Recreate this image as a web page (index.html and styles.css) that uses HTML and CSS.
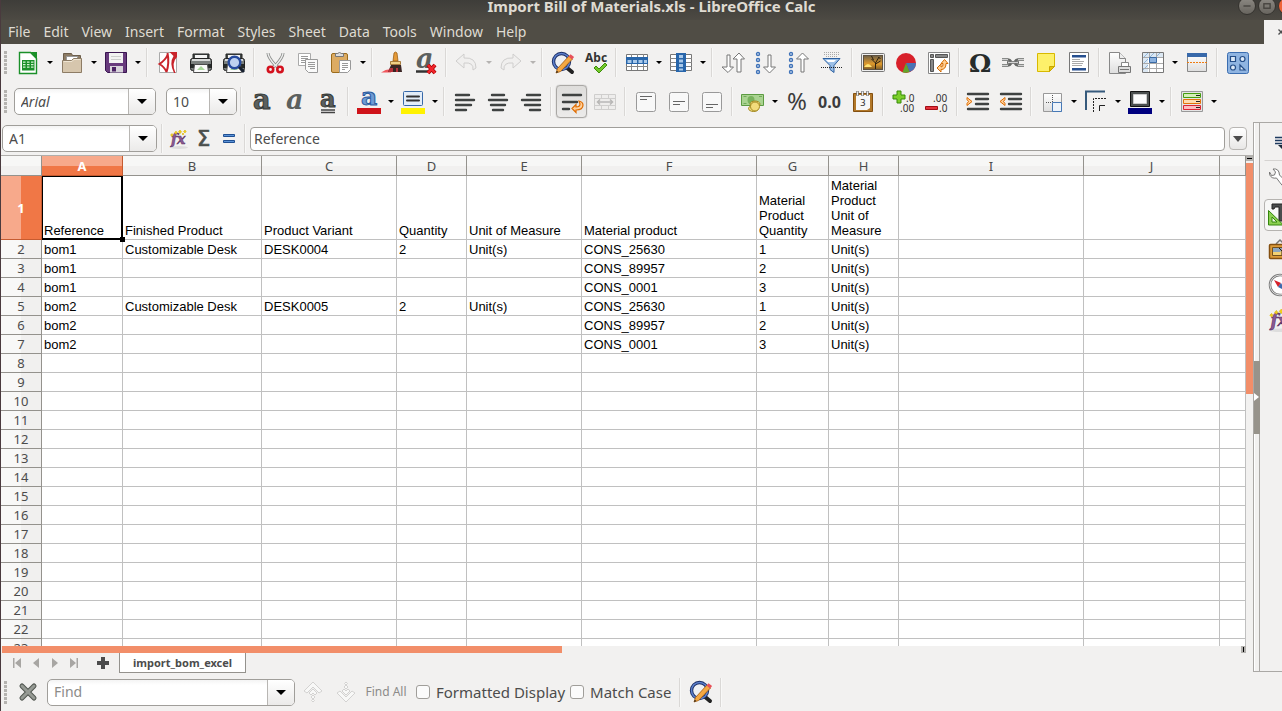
FILE: index.html
```html
<!DOCTYPE html>
<html lang="en">
<head>
<meta charset="utf-8">
<title>Import Bill of Materials.xls - LibreOffice Calc</title>
<link rel="stylesheet" href="styles.css">
</head>
<body>
<svg class="defs" aria-hidden="true">
  <defs>
    <linearGradient id="g-paper" x1="0" y1="0" x2="0" y2="1"><stop offset="0" stop-color="#fff"/><stop offset="1" stop-color="#dedede"/></linearGradient>
    <linearGradient id="g-sun" x1="0" y1="0" x2="0" y2="1"><stop offset="0" stop-color="#6d6048"/><stop offset=".6" stop-color="#e09a2c"/><stop offset="1" stop-color="#7a5a28"/></linearGradient>
    <symbol id="i-find" viewBox="0 0 24 24">
      <path d="M15 16l6 5" stroke="#222" stroke-width="4" stroke-linecap="round"/>
      <circle cx="10.500" cy="10.500" r="8" fill="#eef0f4" stroke="#1d2f66" stroke-width="3.400"/>
      <circle cx="10.500" cy="10.500" r="8" fill="none" stroke="#5d81cf" stroke-width="1.500"/>
      <path d="M5 22l1.500-4.500L18 5l3.500 3L9.500 20.500z" fill="#f5a843" stroke="#a0590c" stroke-width=".8"/>
      <path d="M17.500 5.500l2-2.200 3.600 2.800-2 2.400z" fill="#e8505a"/><path d="M5 22l.8-2.300 1.500 1.300z" fill="#222"/>
    </symbol>
    <symbol id="i-fx" viewBox="0 0 24 24">
      <ellipse cx="12" cy="20.500" rx="9" ry="1.500" fill="#ddd"/>
      <text x="4" y="17" font-family="DejaVu Serif" font-size="14" font-style="italic" font-weight="bold" fill="#8a5a93" stroke="#5a2f62" stroke-width=".5">fx</text>
      <path d="M5 6.500l1 1.500-1 1.500-1.500-1.500zM9 4l1.200 1.700L9 7.200 7.500 5.700zM13 3l1.600 1.800L13 6.700l-1.600-1.900zM18 3l1.200 1.500L18 6l-1.500-1.500zM16 6l1 1-1 1-1-1z" fill="#f0cf1c" stroke="#d8b000" stroke-width=".5"/>
    </symbol>
    <symbol id="i-picture" viewBox="0 0 24 24">
      <rect x=".5" y="2.500" width="23" height="18" rx="1" fill="#eee" stroke="#777"/>
      <rect x="2.500" y="4.500" width="19" height="14" fill="url(#g-sun)" stroke="#5d5140"/>
      <path d="M3 16q4-6 8 0z" fill="#ffe272"/><path d="M14.500 18v-6l-4-4m4 4l3.500-6m-3.500 7l5-3m-9-5l2 4m5-3l2 2" stroke="#2b2010" stroke-width="1" fill="none"/>
    </symbol>
    <symbol id="i-printer" viewBox="0 0 24 24">
      <path d="M4 3h16v5H4z" fill="#444a48" stroke="#222"/><path d="M6 4h12v4H6z" fill="#f4f4f4"/>
      <rect x="1.500" y="7.500" width="21" height="12" rx="2" fill="#7b807e" stroke="#222"/>
      <path d="M2 13h20v4H2z" fill="#262a29"/><path d="M3 9h18" stroke="#d8dad9" stroke-width="2"/>
      <path d="M5.500 13.500h13l1 8h-15z" fill="#fafafa" stroke="#4c4c4c"/><path d="M8 19l4-4 4 4z" fill="#a8d79a"/>
    </symbol>
    <symbol id="i-sheet-doc" viewBox="0 0 24 24">
      <path d="M3.500 1.500h11l6 6v15h-17z" fill="#fff" stroke="#1b9029" stroke-width="1.400"/><path d="M14.500 1h6.500v7z" fill="#1b9029"/>
      <path d="M6 9h12.500v10.500H6z" fill="#1b9029"/><path d="M7 10.500h2.500v1.200H7zm4 0h2.500v1.200H11zm4 0h2.500v1.200H15zm-8 2.500h2.500v1.200H7zm4 0h2.500v1.200H11zm4 0h2.500v1.200H15zM7 15.500h2.500v1.200H7zm4 0h2.500v1.200H11zm4 0h2.500v1.200H15z" fill="#d4f5d2"/>
    </symbol>
    <symbol id="i-findup" viewBox="0 0 24 24">
      <path d="M12 2l9 9-3 2-6-6-6 6-3-2zM12 9l4 4-2 2-2-2-2 2-2-2zM12 15l2 2-2 2-2-2zM12 19l1.500 1.500L12 22l-1.500-1.500z" fill="#f8f8f7" stroke="#cfcecd" stroke-width=".9"/>
    </symbol>
  </defs>
</svg>

<div class="app">
  <header class="titlebar">
    <h1>Import Bill of Materials.xls - LibreOffice Calc</h1>
    <div class="window-controls">
      <button aria-label="Minimize"><svg viewBox="0 0 18 18"><path d="M5 9h8" stroke="#45433e" stroke-width="1.500"/></svg></button>
      <button aria-label="Maximize"><svg viewBox="0 0 18 18"><rect x="5.500" y="6.500" width="7" height="5" fill="none" stroke="#45433e" stroke-width="1.500"/></svg></button>
      <button class="close" aria-label="Close"></button>
    </div>
  </header>
  <nav class="menubar">
    <button>File</button><button>Edit</button><button>View</button><button>Insert</button><button>Format</button><button>Styles</button><button>Sheet</button><button>Data</button><button>Tools</button><button>Window</button><button>Help</button>
    <button class="close-doc" aria-label="Close document"><svg viewBox="0 0 8 8"><path d="M1.500 1.500l5 5m0-5l-5 5" stroke="#4c4c4c" stroke-width="1.300"/></svg></button>
  </nav>

  <div class="toolbar">
    <span class="handle"></span>
    <button class="tool" aria-label="New"><svg><use href="#i-sheet-doc"/></svg></button><button class="drop" aria-label="New options"></button>
    <button class="tool" aria-label="Open"><svg viewBox="0 0 24 24"><path d="M3.500 2.500h8l1 2h8v14h-17z" fill="#8d7c65" stroke="#6d5e4b"/><path d="M6.500 5.500h11v9h-11z" fill="#fff" stroke="#999"/><path d="M2.500 9.500h9l2-2h8v14h-19z" fill="#d6c6ad" stroke="#8d7c65"/><path d="M3.500 10.500h8.500l2-2h6.500" stroke="#efe5d3" fill="none"/></svg></button><button class="drop" aria-label="Open options"></button>
    <button class="tool" aria-label="Save"><svg viewBox="0 0 24 24"><path d="M1.500 1.500h21v20h-19l-2-2z" fill="#673a7c" stroke="#391550"/><path d="M5 2h14v10H5z" fill="#f2f2f2"/><path d="M7 5.500h10M7 8.500h10" stroke="#ccc"/><path d="M6 15h13v6.500H6z" fill="#d7d3da"/><path d="M8 16h4v4.500H8z" fill="#4b2063"/></svg></button><button class="drop" aria-label="Save options"></button>
    <span class="sep"></span>
    <button class="tool" aria-label="Export as PDF"><svg viewBox="0 0 24 24"><path d="M3.500 1.500h17v20h-17z" fill="#fff" stroke="#aaa"/><path d="M11.500 4q-2 5-8 9 5 3 7 8M11.500 2q2 10-1 19" fill="none" stroke="#c9242b" stroke-width="2"/><path d="M13.500 1H21v5q-6 6-1.500 16H18q-5-10-.5-17z" fill="#c9242b"/></svg></button>
    <button class="tool" aria-label="Print"><svg><use href="#i-printer"/></svg></button>
    <button class="tool" aria-label="Print Preview"><svg viewBox="0 0 24 24"><use href="#i-printer"/><circle cx="12.500" cy="11.500" r="5.800" fill="#bdd1f0" stroke="#274b9e" stroke-width="2.400"/><path d="M17 16l5 5" stroke="#17202f" stroke-width="3"/></svg></button>
    <span class="sep"></span>
    <button class="tool" aria-label="Cut"><svg viewBox="0 0 24 24"><path d="M5 2q0 4 7 12l3 2M20 2q0 4-7 12l-3 2" fill="none" stroke="#8a8c8a" stroke-width="3"/><path d="M5 2q0 4 7 12l3 2M20 2q0 4-7 12l-3 2" fill="none" stroke="#eee" stroke-width="1.400"/><circle cx="7.500" cy="18.500" r="2.700" fill="none" stroke="#d4121e" stroke-width="2.600"/><circle cx="17" cy="18.500" r="2.700" fill="none" stroke="#d4121e" stroke-width="2.600"/></svg></button>
    <button class="tool" aria-label="Copy"><svg viewBox="0 0 24 24"><path d="M2.500 2.500h12v12h-12z" fill="#fff" stroke="#aaa"/><path d="M5 5.500h7M5 7.500h7M5 9.500h7M5 11.500h4" stroke="#999"/><path d="M9.500 8.500h12v13h-9l-3-3z" fill="#fafafa" stroke="#999"/><path d="M12 11.500h7M12 13.500h7M12 15.500h7M14 17.500h5" stroke="#999"/></svg></button>
    <button class="tool" aria-label="Paste"><svg viewBox="0 0 24 24"><rect x="2.500" y="2.500" width="16" height="19" rx="1.500" fill="#dcab62" stroke="#9b6c1c"/><path d="M6.500 5.500v-3h2q2-2 4 0h2v3z" fill="#ddd" stroke="#777"/><path d="M10.500 9.500h11v9l-3 3h-8z" fill="#fff" stroke="#999"/><path d="M13 12.500h6M13 14.500h6M13 16.500h6M13 18.500h3" stroke="#999"/></svg></button><button class="drop" aria-label="Paste options"></button>
    <span class="sep"></span>
    <button class="tool" aria-label="Clone Formatting"><svg viewBox="0 0 24 24"><path d="M0 21.500q6-4 11-3l-1 3z" fill="#f1575d"/><path d="M13 2q1.500-2 3 0l1 8h-5z" fill="#e59a38" stroke="#915508" stroke-width=".7"/><path d="M9.500 10.500h10v3h-10z" fill="#efcf86" stroke="#96631f" stroke-width=".8"/><path d="M10 14h10l1 7H7z" fill="#3a2524"/><path d="M9 17h3v4H7zM15 17h2v4h-2z" fill="#b8323a"/></svg></button>
    <button class="tool" aria-label="Clear Formatting"><svg viewBox="0 0 24 24"><text x="2" y="17" class="slab-it" font-size="27">a</text><path d="M2 20.500h12" stroke="#333" stroke-width="2.500"/><path d="M14 14l7 8m0-8l-7 8" stroke="#a50000" stroke-width="4"/><path d="M14 14l7 8m0-8l-7 8" stroke="#f2252c" stroke-width="2.600"/></svg></button>
    <span class="sep"></span>
    <button class="tool" aria-label="Undo" disabled><svg viewBox="0 0 24 24"><path d="M1 10l8-7v4q12-1 12 10l-3 2q1-8-9-7v5z" fill="#f0efee" stroke="#cfcecd"/></svg></button><button class="drop" aria-label="Undo history" disabled></button>
    <button class="tool" aria-label="Redo" disabled><svg viewBox="0 0 24 24"><path d="M22 10l-8-7v4Q2 6 2 17l3 2q-1-8 9-7v5z" fill="#f0efee" stroke="#cfcecd"/></svg></button><button class="drop" aria-label="Redo history" disabled></button>
    <span class="sep"></span>
    <button class="tool" aria-label="Find and Replace"><svg><use href="#i-find"/></svg></button>
    <button class="tool" aria-label="Spelling"><svg viewBox="0 0 24 24"><text x="1" y="11" font-family="Noto Sans" font-weight="bold" font-size="12" fill="#333">Abc</text><path d="M10 17l2-2 3 3 6-6 2 2-8 8z" fill="#74c82c" stroke="#3c8d08"/></svg></button>
    <span class="sep"></span>
    <button class="tool" aria-label="Row"><svg viewBox="0 0 24 24"><path d="M1.500 3.500h21v16h-21z" fill="#fff" stroke="#777"/><path d="M1 7.500h22M1 15.500h22M6.500 3v16M12.500 3v16M18.500 3v16" stroke="#888"/><path d="M1 6h22v7H1z" fill="#2866ab"/><path d="M2.500 9h4v3h-4zM8 9h4v3H8zM13.500 9h4v3h-4zM19 9h3v3h-3z" fill="#a9c9ea"/></svg></button><button class="drop" aria-label="Row options"></button>
    <button class="tool" aria-label="Column"><svg viewBox="0 0 24 24"><path d="M1.500 3.500h21v16h-21z" fill="#fff" stroke="#777"/><path d="M1 7.500h22M1 11.500h22M1 15.500h22" stroke="#888"/><path d="M7 2h10v19H7z" fill="#2866ab"/><path d="M10 4h4v3h-4zM10 8.500h4v3h-4zM10 13h4v3h-4zM10 17.500h4v2h-4z" fill="#a9c9ea"/></svg></button><button class="drop" aria-label="Column options"></button>
    <span class="sep"></span>
    <button class="tool" aria-label="Sort"><svg viewBox="0 0 24 24"><path d="M6 4h3v12h3.500L7 21.500 1 16h5zM16 21h4V8h3.500L18 2l-6 6h4z" fill="#fff" stroke="#777"/></svg></button>
    <button class="tool" aria-label="Sort Ascending"><svg viewBox="0 0 24 24"><g fill="#fff" stroke="#3f72b8" stroke-width="1.400"><circle cx="4" cy="3" r="1.500"/><circle cx="4" cy="9" r="1.500"/><circle cx="4" cy="15" r="1.500"/><circle cx="4" cy="21" r="1.500"/></g><path d="M14 4h3v12h4.500L15.500 22l-6-6H14z" fill="#fff" stroke="#777"/></svg></button>
    <button class="tool" aria-label="Sort Descending"><svg viewBox="0 0 24 24"><g fill="#fff" stroke="#3f72b8" stroke-width="1.400"><circle cx="4" cy="3" r="1.500"/><circle cx="4" cy="9" r="1.500"/><circle cx="4" cy="15" r="1.500"/><circle cx="4" cy="21" r="1.500"/></g><path d="M14 21h3V8h4.500l-6-6-6 6H14z" fill="#fff" stroke="#777"/></svg></button>
    <button class="tool" aria-label="AutoFilter"><svg viewBox="0 0 24 24"><path d="M4 1.500h15M4 3.500h15M6 5.500h12" stroke="#aaa" stroke-dasharray="1 1"/><path d="M3 7.500h17l-6 7v7l-4-3v-4z" fill="#9cc0e8" stroke="#2c60a0"/><path d="M6 9h10l-2 2H8z" fill="#fff"/><path d="M1 16.500h22" stroke="#222" stroke-dasharray="1 1"/></svg></button>
    <span class="sep"></span>
    <button class="tool" aria-label="Insert Image"><svg><use href="#i-picture"/></svg></button>
    <button class="tool" aria-label="Insert Chart"><svg viewBox="0 0 24 24"><circle cx="12" cy="12" r="10" fill="#d8202a"/><path d="M12 12h10a10 10 0 0 1-6.500 9z" fill="#4a73b4"/><path d="M12 12l3.500 9a10 10 0 0 1-7 .3z" fill="#64a52c"/></svg></button>
    <button class="tool" aria-label="Insert Pivot Table"><svg viewBox="0 0 24 24"><path d="M1.500 1.500h21v21h-21z" fill="#fff" stroke="#888"/><path d="M3.500 3.500h3v3h-3zM8.500 3.500h12v3h-12zM3.500 8.500h3v12h-3z" fill="#888" stroke="#555"/><path d="M17.500 8.500l3.500 4h-2q0 6-5 6v2.500l-4-4 4-4V16q2.500 0 2-3.500h-2z" fill="#ffcf93" stroke="#d56a00"/></svg></button>
    <span class="sep"></span>
    <button class="tool" aria-label="Special Character"><svg viewBox="0 0 24 24"><text x="1" y="21" font-family="DejaVu Serif" font-weight="bold" font-size="25" fill="#262b2b">Ω</text></svg></button>
    <button class="tool" aria-label="Insert Hyperlink"><svg viewBox="0 0 24 24"><path d="M1 8.500h6q2 0 3 2M1 14.500h6q2 0 3-2M23 8.500h-6q-2 0-3 2M23 14.500h-6q-2 0-3-2" fill="none" stroke="#666866" stroke-width="2.600"/><path d="M1 8.500h6M1 14.500h6M23 8.500h-6M23 14.500h-6" stroke="#ddd" stroke-width=".9"/><path d="M6 11.500h12" stroke="#666866" stroke-width="2.600"/><path d="M7 11.500h10" stroke="#ddd" stroke-width=".9"/></svg></button>
    <button class="tool" aria-label="Insert Comment"><svg viewBox="0 0 24 24"><path d="M3.500 2.500h17v13l-5 5h-12z" fill="#fdf06a" stroke="#d8b900"/><path d="M20.500 15.500l-5 5v-5z" fill="#e5c40c" stroke="#c8a600"/></svg></button>
    <button class="tool" aria-label="Headers and Footers"><svg viewBox="0 0 24 24"><path d="M2.500 1.500h19v20h-19z" fill="#fff" stroke="#777"/><path d="M5 4h14v2.500H5zM5 17h14v2.500H5z" fill="#264f8f"/><path d="M5 8.500h8M5 10.500h12M5 12.500h11M5 14.500h10" stroke="#aaa"/></svg></button>
    <span class="sep"></span>
    <button class="tool" aria-label="Define Print Area"><svg viewBox="0 0 24 24"><path d="M1.500 1.500h10l6 6v15h-16z" fill="url(#g-paper)" stroke="#888"/><path d="M11.500 1.500v6h6" fill="#eee" stroke="#888"/><path d="M13.500 11.500h7v5h-7z" fill="#fff" stroke="#888"/><path d="M10.500 15.500h12v6h-12z" fill="#ddd" stroke="#777"/><path d="M12 18.500h9" stroke="#777"/></svg></button>
    <button class="tool" aria-label="Freeze Rows and Columns"><svg viewBox="0 0 24 24"><path d="M1.500 1.500h21v20h-21z" fill="#fff" stroke="#777"/><path d="M2 2h20v5H2zM2 7h5v14H2z" fill="#dce8f3"/><path d="M3 6l4-4M9 6l4-4M15 6l4-4M2 13l5-5M2 19l5-5" stroke="#91b5d6"/><path d="M2 6.500h20M8.500 2v19M2 12.500h20M2 17.500h20M15.500 2v19" stroke="#aaa"/><path d="M8.500 6.500h7v5h-7z" fill="#8cb2df" stroke="#3c6ba5"/></svg></button><button class="drop" aria-label="Freeze options"></button>
    <button class="tool" aria-label="Split Window"><svg viewBox="0 0 24 24"><path d="M2.500 2.500h19v18h-19z" fill="url(#g-paper)" stroke="#888"/><path d="M2 2h20v4H2z" fill="#3869aa"/><path d="M2 11.500h20" stroke="#ef7d12" stroke-dasharray="2 1"/></svg></button>
    <span class="sep"></span>
    <button class="tool" aria-label="Show Draw Functions"><svg viewBox="0 0 24 24"><rect x="1.500" y="1.500" width="21" height="21" rx="2" fill="#8fb4e1" stroke="#3b6db0"/><g fill="#dce9f7" stroke="#244d87" stroke-width="1.200"><path d="M4.500 5.500h5v5h-5zM14 19v-5l5 5z"/><circle cx="16.500" cy="8" r="2.500"/><circle cx="7" cy="16.500" r="2.500"/></g></svg></button>
  </div>

  <div class="toolbar">
    <span class="handle"></span>
    <div class="combo font-name"><input type="text" value="Arial" aria-label="Font name"><button aria-label="Show fonts"></button></div>
    <div class="combo font-size"><input type="text" value="10" aria-label="Font size"><button aria-label="Show sizes"></button></div>
    <span class="sep"></span>
    <button class="tool" aria-label="Bold"><svg viewBox="0 0 24 24"><text x="3" y="19" class="slab" font-size="27">a</text></svg></button>
    <button class="tool" aria-label="Italic"><svg viewBox="0 0 24 24"><text x="3" y="19" class="slab-it" font-size="27">a</text></svg></button>
    <button class="tool" aria-label="Underline"><svg viewBox="0 0 24 24"><text x="4" y="17" class="slab" font-size="24">a</text><path d="M5 20h14M5 22.500h14" stroke="#444" stroke-width="1.300"/></svg></button>
    <span class="sep"></span>
    <button class="tool" aria-label="Font Color"><svg viewBox="0 0 24 24"><text x="4" y="15" font-family="DejaVu Serif" font-weight="bold" font-size="25" fill="#6e9bd5" stroke="#2b5b9e">a</text><path d="M0 18h24v6H0z" fill="#cf1319"/></svg></button><button class="drop" aria-label="Font color options"></button>
    <button class="tool" aria-label="Highlighting"><svg viewBox="0 0 24 24"><rect x="2.500" y="1.500" width="19" height="14" rx="1" fill="#e3edf8" stroke="#3768a8"/><path d="M6 6.500h12M6 10.500h12" stroke="#333" stroke-width="2" stroke-linecap="round"/><path d="M0 18h24v6H0z" fill="#fff200"/></svg></button><button class="drop" aria-label="Highlighting options"></button>
    <span class="sep"></span>
    <button class="tool" aria-label="Align Left"><svg viewBox="0 0 24 24"><path d="M3 5h13M3 10h18M3 15h15M3 20h10" class="bars"/></svg></button>
    <button class="tool" aria-label="Center"><svg viewBox="0 0 24 24"><path d="M6 5h12M3 10h18M5 15h14M7 20h10" class="bars"/></svg></button>
    <button class="tool" aria-label="Align Right"><svg viewBox="0 0 24 24"><path d="M8 5h13M3 10h18M6 15h15M11 20h10" class="bars"/></svg></button>
    <span class="sep"></span>
    <button class="tool pressed" aria-label="Wrap Text"><svg viewBox="0 0 24 24"><path d="M3 5h18M3 12h14M3 19h6" class="bars"/><path d="M19 11q4 1 4 4 0 5-7 5v2.500l-4-4 4-4V17q4 0 4-3z" fill="#ffd09a" stroke="#e06c00" stroke-width="1.200"/></svg></button>
    <button class="tool" aria-label="Merge Cells" disabled><svg viewBox="0 0 24 24"><path d="M1.500 4.500h21v15h-21z" fill="#eeedec" stroke="#cfcecd"/><path d="M1 8.500h22M1 15.500h22M8.500 4v4M15.500 4v4M8.500 16v4M15.500 16v4" stroke="#cfcecd"/><path d="M4 12h16M7 9.500L4.500 12 7 14.500M17 9.500l2.500 2.500-2.500 2.500" fill="none" stroke="#b8b7b6" stroke-width="1.500"/></svg></button>
    <span class="sep"></span>
    <button class="tool" aria-label="Align Top"><svg viewBox="0 0 24 24"><rect x="2.500" y="2.500" width="19" height="19" rx="2" class="valign"/><path d="M6 6.500h12M6 9.500h7" stroke="#666"/></svg></button>
    <button class="tool" aria-label="Center Vertically"><svg viewBox="0 0 24 24"><rect x="2.500" y="2.500" width="19" height="19" rx="2" class="valign"/><path d="M6 11.500h12M6 14.500h7" stroke="#666"/></svg></button>
    <button class="tool" aria-label="Align Bottom"><svg viewBox="0 0 24 24"><rect x="2.500" y="2.500" width="19" height="19" rx="2" class="valign"/><path d="M6 14.500h12M6 17.500h7" stroke="#666"/></svg></button>
    <span class="sep"></span>
    <button class="tool" aria-label="Format as Currency"><svg viewBox="0 0 24 24"><path d="M.5 4.500h22v11H.5z" fill="#a9d390" stroke="#5c9b42"/><ellipse cx="10" cy="10" rx="3.500" ry="4" fill="#78b35d"/><path d="M2.500 6.500h3M2.500 13.500h3M18 6.500h3" stroke="#71a95a"/><g fill="#f2dc7c" stroke="#a48a21"><ellipse cx="14" cy="14" rx="5" ry="3"/><ellipse cx="12.500" cy="18.500" rx="5" ry="3"/><circle cx="14" cy="16.500" r="4.500"/></g></svg></button><button class="drop" aria-label="Currency options"></button>
    <button class="tool" aria-label="Format as Percent"><svg viewBox="0 0 24 24"><text x="2" y="20" font-family="Noto Sans" font-size="24" fill="#3c3c3c">%</text></svg></button>
    <button class="tool" aria-label="Format as Number"><span class="number-icon">0.0</span></button>
    <button class="tool" aria-label="Format as Date"><svg viewBox="0 0 24 24"><path d="M2.500 3.500h19v18h-19z" fill="#b27829" stroke="#845010"/><path d="M5 5h14v13l-3 2H5z" fill="#f7f7f7"/><path d="M6.500 1v5M11.500 1v5M16.500 1v5" stroke="#777" stroke-width="2.500"/><path d="M6.500 1.500v4M11.500 1.500v4M16.500 1.500v4" stroke="#eee"/><text x="9" y="16" font-family="DejaVu Sans" font-size="9" fill="#333">3</text></svg></button>
    <span class="sep"></span>
    <button class="tool" aria-label="Add Decimal Place"><svg viewBox="0 0 24 24"><path d="M5 1h4v4h4v4H9v4H5V9H1V5h4z" fill="#7ccf2b" stroke="#378a08"/><text x="14" y="12" class="dec">.0</text><text x="8" y="22" class="dec">.00</text></svg></button>
    <button class="tool" aria-label="Delete Decimal Place"><svg viewBox="0 0 24 24"><path d="M.5 16.500h12v3h-12z" fill="#e4313a" stroke="#a10d15"/><text x="8" y="12" class="dec">.00</text><text x="14" y="22" class="dec">.0</text></svg></button>
    <span class="sep"></span>
    <button class="tool" aria-label="Increase Indent"><svg viewBox="0 0 24 24"><path d="M2 4h20M10 9h12M10 14h12M2 19h20" class="bars"/><path d="M1 7.500l5 4-5 4v-2l1.500-2L1 9.500z" fill="#ffd09a" stroke="#e06c00"/></svg></button>
    <button class="tool" aria-label="Decrease Indent"><svg viewBox="0 0 24 24"><path d="M2 4h20M10 9h12M10 14h12M2 19h20" class="bars"/><path d="M6 7.500l-5 4 5 4v-2l-1.500-2L6 9.500z" fill="#ffd09a" stroke="#e06c00"/></svg></button>
    <span class="sep"></span>
    <button class="tool" aria-label="Borders"><svg viewBox="0 0 24 24"><path d="M3.500 3.500h18v18h-18z" fill="url(#g-paper)" stroke="#999"/><path d="M6 12.500h6M12.500 5v7" stroke="#555" stroke-dasharray="1 1"/><path d="M12.500 12.500h9v9h-9z" fill="#edf3fa" stroke="#4779b6"/></svg></button><button class="drop" aria-label="Border options"></button>
    <button class="tool" aria-label="Border Style"><svg viewBox="0 0 24 24"><path d="M2 20V1.500h19" fill="none" stroke="#365a7c" stroke-width="2"/><path d="M9.500 22V8.500H22" fill="none" stroke="#222" stroke-dasharray="2 1"/><path d="M15.500 21v-5.500H21" fill="none" stroke="#222"/></svg></button><button class="drop" aria-label="Border style options"></button>
    <button class="tool" aria-label="Border Color"><svg viewBox="0 0 24 24"><path d="M2.500 1.500h19v15h-19z" fill="#4b4f4f" stroke="#111"/><path d="M5.500 4.500h13v9h-13z" fill="#fafafa" stroke="#ccc"/><path d="M0 18h24v6H0z" fill="#00007f"/></svg></button><button class="drop" aria-label="Border color options"></button>
    <span class="sep"></span>
    <button class="tool" aria-label="Conditional Formatting"><svg viewBox="0 0 24 24"><path d="M1.500 1.500h21v20h-21z" fill="#e5e5e5" stroke="#999"/><path d="M3.500 3.500h17v4h-17z" fill="#d5efb9" stroke="#459c10"/><path d="M3.500 9.500h17v4h-17z" fill="#ffddb0" stroke="#e37309"/><path d="M3.500 15.500h17v4h-17z" fill="#fcbcc0" stroke="#db2632"/><path d="M16 5.500h4M16 11.500h4M16 17.500h4" stroke="#222"/></svg></button><button class="drop" aria-label="Conditional formatting options"></button>
  </div>

  <div class="workspace">
    <main class="document">
      <div class="formula-bar">
        <div class="combo name-box"><input type="text" value="A1" aria-label="Name box"><button aria-label="Show names"></button></div>
        <span class="sep"></span>
        <button class="tool small" aria-label="Function Wizard"><svg><use href="#i-fx"/></svg></button>
        <button class="tool small" aria-label="Sum"><svg viewBox="0 0 24 24"><text x="5" y="19" font-family="DejaVu Sans" font-size="21" fill="#4a4e4c" stroke="#4a4e4c" stroke-width=".7">Σ</text></svg></button>
        <button class="tool small" aria-label="Function"><svg viewBox="0 0 24 24"><path d="M6.500 7.500h11v2h-11zM6.500 13.500h11v2h-11z" fill="#5b93d8" stroke="#1f4f92"/></svg></button>
        <span class="sep"></span>
        <input class="formula" type="text" value="Reference" aria-label="Formula">
        <button class="expand" aria-label="Expand formula bar"></button>
      </div>

      <div class="sheet-area">
        <div class="sheet">
          <table>
            <colgroup><col class="c-row"><col class="c-a"><col class="c-b"><col class="c-c"><col class="c-d"><col class="c-e"><col class="c-f"><col class="c-g"><col class="c-h"><col class="c-i"><col class="c-j"><col></colgroup>
            <thead><tr><th></th><th class="selected">A</th><th>B</th><th>C</th><th>D</th><th>E</th><th>F</th><th>G</th><th>H</th><th>I</th><th>J</th><th></th></tr></thead>
            <tbody>
            <tr class="tall"><th class="selected">1</th><td class="cursor">Reference</td><td>Finished Product</td><td>Product Variant</td><td>Quantity</td><td>Unit of Measure</td><td>Material product</td><td>Material Product Quantity</td><td>Material Product Unit of Measure</td><td></td><td></td><td></td></tr>
            <tr><th>2</th><td>bom1</td><td>Customizable Desk</td><td>DESK0004</td><td>2</td><td>Unit(s)</td><td>CONS_25630</td><td>1</td><td>Unit(s)</td><td></td><td></td><td></td></tr>
            <tr><th>3</th><td>bom1</td><td></td><td></td><td></td><td></td><td>CONS_89957</td><td>2</td><td>Unit(s)</td><td></td><td></td><td></td></tr>
            <tr><th>4</th><td>bom1</td><td></td><td></td><td></td><td></td><td>CONS_0001</td><td>3</td><td>Unit(s)</td><td></td><td></td><td></td></tr>
            <tr><th>5</th><td>bom2</td><td>Customizable Desk</td><td>DESK0005</td><td>2</td><td>Unit(s)</td><td>CONS_25630</td><td>1</td><td>Unit(s)</td><td></td><td></td><td></td></tr>
            <tr><th>6</th><td>bom2</td><td></td><td></td><td></td><td></td><td>CONS_89957</td><td>2</td><td>Unit(s)</td><td></td><td></td><td></td></tr>
            <tr><th>7</th><td>bom2</td><td></td><td></td><td></td><td></td><td>CONS_0001</td><td>3</td><td>Unit(s)</td><td></td><td></td><td></td></tr>
            <tr><th>8</th><td></td><td></td><td></td><td></td><td></td><td></td><td></td><td></td><td></td><td></td><td></td></tr>
            <tr><th>9</th><td></td><td></td><td></td><td></td><td></td><td></td><td></td><td></td><td></td><td></td><td></td></tr>
            <tr><th>10</th><td></td><td></td><td></td><td></td><td></td><td></td><td></td><td></td><td></td><td></td><td></td></tr>
            <tr><th>11</th><td></td><td></td><td></td><td></td><td></td><td></td><td></td><td></td><td></td><td></td><td></td></tr>
            <tr><th>12</th><td></td><td></td><td></td><td></td><td></td><td></td><td></td><td></td><td></td><td></td><td></td></tr>
            <tr><th>13</th><td></td><td></td><td></td><td></td><td></td><td></td><td></td><td></td><td></td><td></td><td></td></tr>
            <tr><th>14</th><td></td><td></td><td></td><td></td><td></td><td></td><td></td><td></td><td></td><td></td><td></td></tr>
            <tr><th>15</th><td></td><td></td><td></td><td></td><td></td><td></td><td></td><td></td><td></td><td></td><td></td></tr>
            <tr><th>16</th><td></td><td></td><td></td><td></td><td></td><td></td><td></td><td></td><td></td><td></td><td></td></tr>
            <tr><th>17</th><td></td><td></td><td></td><td></td><td></td><td></td><td></td><td></td><td></td><td></td><td></td></tr>
            <tr><th>18</th><td></td><td></td><td></td><td></td><td></td><td></td><td></td><td></td><td></td><td></td><td></td></tr>
            <tr><th>19</th><td></td><td></td><td></td><td></td><td></td><td></td><td></td><td></td><td></td><td></td><td></td></tr>
            <tr><th>20</th><td></td><td></td><td></td><td></td><td></td><td></td><td></td><td></td><td></td><td></td><td></td></tr>
            <tr><th>21</th><td></td><td></td><td></td><td></td><td></td><td></td><td></td><td></td><td></td><td></td><td></td></tr>
            <tr><th>22</th><td></td><td></td><td></td><td></td><td></td><td></td><td></td><td></td><td></td><td></td><td></td></tr>
            <tr><th>23</th><td></td><td></td><td></td><td></td><td></td><td></td><td></td><td></td><td></td><td></td><td></td></tr>
            </tbody>
          </table>
        </div>
        <div class="vscroll"><span class="splitter"></span><span class="thumb"></span></div>
      </div>
      <div class="hscroll"><span class="thumb"></span><span class="splitter"></span></div>

      <div class="sheet-tabs">
        <button class="nav" aria-label="First sheet"><svg viewBox="0 0 12 12"><path d="M2 1h1.500v10H2zM10 1v10L4 6z"/></svg></button>
        <button class="nav" aria-label="Previous sheet"><svg viewBox="0 0 12 12"><path d="M9 1v10L3 6z"/></svg></button>
        <button class="nav" aria-label="Next sheet"><svg viewBox="0 0 12 12"><path d="M3 1v10l6-5z"/></svg></button>
        <button class="nav" aria-label="Last sheet"><svg viewBox="0 0 12 12"><path d="M2 1v10l6-5zM8.500 1H10v10H8.500z"/></svg></button>
        <button class="add-sheet" aria-label="Add sheet"><svg viewBox="0 0 12 12"><path d="M4 0h4v4h4v4H8v4H4V8H0V4h4z"/></svg></button>
        <button class="tab">import_bom_excel</button>
      </div>
    </main>

    <aside class="sidebar">
      <div class="grip"><button aria-label="Hide sidebar"></button></div>
      <div class="deck">
        <button class="side menu" aria-label="Sidebar settings"><svg viewBox="0 0 24 24"><path d="M7 7.500h14M7 10.500h14M7 13.500h14" stroke="#1e3a5f" stroke-width="1.400"/><path d="M10 15h8l-4 4z" fill="#1e2a3a"/></svg></button>
        <button class="side" aria-label="Properties"><svg viewBox="0 0 24 24"><path d="M1.500 4l2 3.500 3-.5 1-3L5 1q6-1 6.500 6l9 9q2 4-2 5-2 0-10-11-5 1-7-3.500z" fill="#fff" stroke="#777"/></svg></button>
        <button class="side active" aria-label="Styles"><svg viewBox="0 0 24 24"><path d="M4 1h19v5h-2l-1-2h-4v14h-5V4H7L6 6H4z" fill="#4a4d4d" stroke="#222"/><path d="M.5 7.500l15 14.500H.5z" fill="#8bcf51" stroke="#35860c"/><path d="M4 14l5 5H4z" fill="#eef8e5" stroke="#35860c"/></svg></button>
        <button class="side" aria-label="Gallery"><svg viewBox="0 0 24 24"><path d="M8 6l4-4 4 4" fill="none" stroke="#777" stroke-width="1.500"/><rect x="1.500" y="6.500" width="21" height="14" rx="1" fill="#dc9b38" stroke="#844f10" stroke-width="1.500"/><path d="M4.500 9.500h15v8h-15z" fill="#f3d173" stroke="#72501d"/><path d="M5 10h14v4l-4-3-3 3H5z" fill="#8ba5bf"/><path d="M14 17v-4l-3-3m3 3l3-3" stroke="#2b2010" fill="none"/></svg></button>
        <button class="side" aria-label="Navigator"><svg viewBox="0 0 24 24"><circle cx="12" cy="12" r="10" fill="#fff" stroke="#777" stroke-width="2.500"/><circle cx="12" cy="12" r="10" fill="none" stroke="#ddd"/><path d="M6 7l7 3-3 4z" fill="#d6212b"/><path d="M13 10l5 8-8-4z" fill="#3c6aae"/></svg></button>
        <button class="side" aria-label="Functions"><svg viewBox="2 2 20 20"><use href="#i-fx" width="24" height="24"/></svg></button>
      </div>
    </aside>
  </div>

  <form class="find-bar">
    <span class="handle"></span>
    <button type="button" class="tool" aria-label="Close Find Bar"><svg viewBox="0 0 24 24"><path d="M6 6l12 12M18 6L6 18" stroke="#50554f" stroke-width="5" stroke-linecap="round"/><path d="M6 6l12 12M18 6L6 18" stroke="#969a94" stroke-width="3" stroke-linecap="round"/></svg></button>
    <div class="combo find-box"><input type="text" placeholder="Find" aria-label="Find"><button type="button" aria-label="Search history"></button></div>
    <button type="button" class="tool" aria-label="Find Previous" disabled><svg><use href="#i-findup"/></svg></button>
    <button type="button" class="tool" aria-label="Find Next" disabled><svg class="flip"><use href="#i-findup"/></svg></button>
    <button type="button" class="find-all" disabled>Find All</button>
    <label><input type="checkbox"><span>Formatted Display</span></label>
    <label><input type="checkbox"><span>Match Case</span></label>
    <span class="sep"></span>
    <button type="button" class="tool" aria-label="Find and Replace"><svg><use href="#i-find"/></svg></button>
    <span class="sep"></span>
  </form>
</div>
</body>
</html>
```
FILE: styles.css
```css
* { box-sizing: border-box; }

body {
  margin: 0;
  overflow: hidden;
  background: #f2f1f0;
  color: #4c4c4c;
  font: 14px/20px "Noto Sans", sans-serif;
}

button {
  margin: 0;
  padding: 0;
  border: 0;
  background: none;
  color: inherit;
  font: inherit;
}

.defs { position: absolute; width: 0; height: 0; }

.app {
  display: flex;
  flex-direction: column;
  height: 100vh;
  border-left: 1px solid #4a3a3e;
}

/* Title and menus */
.titlebar {
  position: relative;
  flex: none;
  height: 20px;
  padding-left: 20px;
  overflow: hidden;
  background: linear-gradient(#3e3d39, #4d4a43);
}
.titlebar h1 {
  margin: 0;
  color: #dfdbd2;
  font-size: 15px;
  line-height: 12px;
  text-align: center;
}
.window-controls {
  position: absolute;
  top: -3px;
  right: -14px;
  display: flex;
  gap: 2px;
}
.window-controls button {
  width: 18px;
  height: 18px;
  border: 1px solid #35332f;
  border-radius: 50%;
  background: linear-gradient(#8c8983, #68655f);
}
.window-controls svg { display: block; width: 16px; height: 16px; }
.window-controls .close { background: #ee6339; }

.menubar {
  display: flex;
  flex: none;
  gap: 13px;
  height: 24px;
  padding-left: 7px;
  background: #504d45;
  color: #dfdbd2;
}
.menubar .close-doc {
  width: 18px;
  margin-left: auto;
  padding-left: 13px;
  overflow: hidden;
  background: #f2f1f0;
}
.close-doc svg { display: block; width: 8px; height: 8px; }

/* Toolbars */
.toolbar {
  display: flex;
  flex: none;
  align-items: center;
  height: 39px;
  padding-bottom: 2px;
}
.handle {
  flex: none;
  width: 3px;
  height: 23px;
  margin: 0 4px 0 3px;
  background: repeating-linear-gradient(#b5b3b0 0 3px, transparent 3px 4px);
}
.tool {
  display: flex;
  flex: none;
  align-items: center;
  justify-content: center;
  width: 33px;
  height: 33px;
}
.tool svg, .side svg { display: block; flex: none; width: 24px; height: 24px; }
.tool.small { width: 25px; }
.tool.pressed {
  width: 31px;
  margin: 0 1px;
  border: 1px solid #aaa8a5;
  border-radius: 4px;
  background: linear-gradient(#dedddb, #ecebea);
  box-shadow: 0 0 1px #888;
}
.flip { transform: scaleY(-1); }
.drop {
  display: flex;
  flex: none;
  justify-content: center;
  width: 11px;
}
.drop::before {
  content: "";
  border: solid transparent;
  border-width: 3px 3px 0;
  border-top-color: #000;
}
.drop:disabled::before { border-top-color: #b5b3b1; }
.sep {
  flex: none;
  width: 2px;
  height: 29px;
  margin: 0 3px;
  border-left: 1px solid #dad8d6;
  background: #f8f8f7;
}
.bars { stroke: #3f4241; stroke-width: 2.400; stroke-linecap: round; }
.valign { fill: #f8f8f8; stroke: #999; }
.slab, .slab-it {
  fill: #5c605e;
  stroke: #363a38;
  font-family: "DejaVu Serif", serif;
  font-weight: bold;
}
.slab-it { font-style: italic; stroke: none; }
.dec { fill: #333; font: 10px "Noto Sans", sans-serif; }
.number-icon { color: #3c3c3c; font-size: 16px; font-weight: 700; }

.combo {
  display: flex;
  flex: none;
  height: 27px;
  border: 1px solid #a09e9a;
  border-radius: 5px;
  overflow: hidden;
  background: linear-gradient(#f4f4f4, #fff 5px);
}
.combo input {
  flex: 1;
  min-width: 0;
  padding: 0 6px;
  border: 0;
  outline: 0;
  background: none;
  color: #4c4c4c;
  font: inherit;
}
.combo input::placeholder { color: #8c8b89; opacity: 1; }
.combo button {
  display: flex;
  align-items: center;
  justify-content: center;
  width: 27px;
  border-left: 1px solid #b8b6b3;
  background: linear-gradient(#fff, #ebeae9);
}
.combo button::before {
  content: "";
  border: solid transparent;
  border-width: 5px 5px 0;
  border-top-color: #000;
}
.font-name { width: 142px; margin: 0 10px 0 3px; }
.font-name input { font-style: italic; }
.font-size { width: 71px; }

/* Document and sidebar */
.workspace { display: flex; flex: 1; min-height: 0; }
.document { display: flex; flex: 1; flex-direction: column; min-width: 0; }

.formula-bar {
  display: flex;
  flex: none;
  align-items: center;
  height: 33px;
  padding: 0 6px 0 1px;
}
.name-box { width: 155px; margin-right: 1px; }
.formula {
  flex: 1;
  min-width: 0;
  height: 24px;
  margin: 0 4px 0 1px;
  padding: 0 3px;
  border: 1px solid #a09e9a;
  border-radius: 4px;
  background: #fff;
  color: #4c4c4c;
  font: inherit;
}
.expand {
  display: flex;
  align-items: center;
  justify-content: center;
  width: 18px;
  height: 23px;
  border: 1px solid #b8b6b3;
  border-radius: 4px;
  background: linear-gradient(#fff, #e8e7e6);
}
.expand::before {
  content: "";
  border: solid transparent;
  border-width: 6px 5px 0;
  border-top-color: #4c4c4c;
}

.sheet-area { display: flex; flex: 1; min-height: 0; }
.sheet {
  flex: 1;
  min-width: 0;
  overflow: hidden;
  border-top: 1px solid #b0aeab;
  background: #fff;
}
table {
  width: 100%;
  border-collapse: separate;
  border-spacing: 0;
  table-layout: fixed;
}
.c-row { width: 41px; }
.c-a { width: 81px; }
.c-b { width: 139px; }
.c-c { width: 135px; }
.c-d { width: 70px; }
.c-e { width: 115px; }
.c-f { width: 175px; }
.c-g { width: 72px; }
.c-h { width: 70px; }
.c-i { width: 185px; }
.c-j { width: 136px; }

th {
  height: 19px;
  padding: 0;
  border: solid #94928d;
  border-width: 0 1px 1px 0;
  font-size: 13px;
  font-weight: 400;
  line-height: 18px;
}
thead th {
  height: 20px;
  background: linear-gradient(#f7f7f6 50%, #f1f0ef 50%);
}
tbody th { background: linear-gradient(90deg, #f8f8f7 20px, #f1f0ef 20px); }
thead .selected {
  border-color: #c65b30;
  background: linear-gradient(#f7a98b 50%, #f07746 50%);
  color: #fff;
  font-weight: 700;
}
tbody .selected {
  border-color: #c65b30;
  background: linear-gradient(90deg, #f7a98b 20px, #f07746 20px);
  color: #fff;
  font-weight: 700;
}
td {
  height: 19px;
  padding: 0 2px;
  border: solid #c0c0c0;
  border-width: 0 1px 1px 0;
  color: #000;
  font: 13px/15px "Liberation Sans", Arial, sans-serif;
  vertical-align: bottom;
}
tbody tr:not(.tall) td { line-height: 16px; }
.tall td { height: 64px; padding-bottom: 1px; }
.cursor { position: relative; }
.cursor::before {
  content: "";
  position: absolute;
  inset: 0 -1px -1px 0;
  border: solid #000;
  border-width: 1px 2px 2px 1px;
}
.cursor::after {
  content: "";
  position: absolute;
  right: -3px;
  bottom: -3px;
  width: 5px;
  height: 5px;
  background: #000;
}

.vscroll {
  display: flex;
  flex: none;
  flex-direction: column;
  gap: 2px;
  width: 7px;
}
.vscroll .splitter {
  height: 6px;
  background: linear-gradient(#000, #000) center / 5px 1px no-repeat #b3b1ae;
}
.vscroll .thumb { height: 47%; background: #f28e69; }
.hscroll {
  display: flex;
  flex: none;
  justify-content: space-between;
  height: 7px;
  padding: 0 7px 0 1px;
}
.hscroll .thumb { width: 45%; background: #f28e69; }
.hscroll .splitter {
  width: 5px;
  background: linear-gradient(#000, #000) center / 1px 5px no-repeat #b3b1ae;
}

.sheet-tabs {
  display: flex;
  flex: none;
  align-items: center;
  height: 20px;
  padding-left: 10px;
}
.nav { width: 19px; fill: #a8a6a3; }
.nav svg { display: block; width: 12px; height: 12px; }
.add-sheet { width: 32px; fill: #4c4c4c; }
.add-sheet svg { display: block; width: 12px; height: 12px; margin: 0 auto; }
.tab {
  height: 20px;
  padding: 0 13px;
  border: 1px solid #94928d;
  border-top: 0;
  background: #fff;
  font-size: 11px;
  font-weight: 700;
  line-height: 18px;
}

.sidebar {
  display: flex;
  flex: none;
  width: 29px;
  height: 550px;
  overflow: hidden;
  border: solid #aaa8a5;
  border-width: 1px 0 1px 1px;
}
.grip {
  display: flex;
  flex: none;
  align-items: center;
  width: 6px;
  border-right: 1px solid #aaa8a5;
  border-left: 1px solid #fff;
}
.grip button {
  display: flex;
  flex: none;
  align-items: center;
  width: 6px;
  height: 73px;
  margin-left: -1px;
  background: #97938b;
}
.grip button::before {
  content: "";
  border: solid transparent;
  border-width: 4px 0 4px 5px;
  border-left-color: #fff;
}
.deck { display: flex; flex: none; flex-direction: column; gap: 3px; padding-left: 4px; }
.side {
  flex: none;
  width: 34px;
  height: 32px;
  padding: 3px;
  border: 1px solid transparent;
  border-radius: 4px;
}
.side.active { border-color: #b5b3b0; background: #f7f7f6; }
.side.menu { height: 38px; border-bottom-color: #d5d3d1; border-radius: 0; }

/* Find bar */
.find-bar {
  display: flex;
  flex: none;
  align-items: center;
  height: 38px;
}
.find-box { width: 248px; margin: 0 1px 0 3px; }
.find-all { width: 48px; margin-right: 6px; color: #8c8b89; font-size: 12px; }
.find-bar label { display: flex; align-items: center; gap: 6px; margin-right: 5px; font-size: 15px; }
.find-bar input[type="checkbox"] {
  width: 14px;
  height: 14px;
  margin: 0;
  border: 1px solid #a09e9a;
  border-radius: 3px;
  background: #fbfbfb;
  appearance: none;
}
```
